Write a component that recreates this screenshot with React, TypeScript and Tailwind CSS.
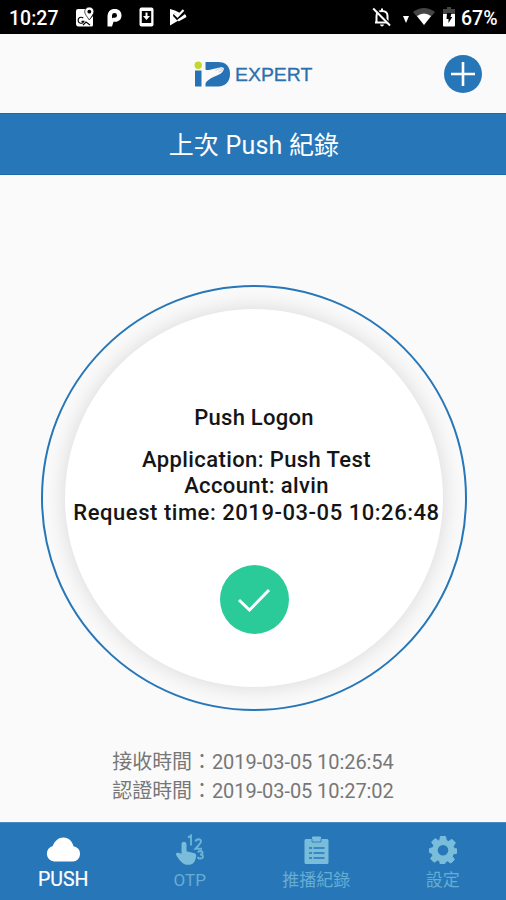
import React from "react";

function StatusBar() {
  return (
    <div className="flex h-[34px] shrink-0 items-center justify-between bg-black pr-2 pl-[9px] text-white">
      <div className="flex items-center">
        <span className="w-[50px] pt-[3px] whitespace-nowrap text-[19.5px] leading-[31px] font-medium">10:27</span>
        <svg className="ml-[16px] h-[20px] w-[20px]" viewBox="0 0 20 20">
          <path d="M3 2h9c-1 3 0 5 3 10l3-3v9q0 1.500-1.500 1.500H3Q1 19 1 17V4Q1 2 3 2z" fill="#fff" />
          <path d="M14.300 0a4.600 4.600 0 0 1 4.600 4.600c0 2.500-2.300 4.800-4.600 8.400-2.300-3.600-4.600-5.900-4.600-8.400A4.600 4.600 0 0 1 14.300 0z" fill="#fff" stroke="#000" strokeWidth=".7" />
          <circle cx="14.300" cy="4.700" r="1.900" fill="#000" />
          <path d="M8.300 11.200a3 3 0 1 0 .6 3.200H6.500M8 18l3-3 4 3" fill="none" stroke="#000" strokeWidth="1.100" />
        </svg>
        <svg className="ml-[12px] h-[19px] w-[15px]" viewBox="0 0 15 18" preserveAspectRatio="none">
          <path d="M.5 9C.5 3.500 3 1 7.800 1 12 1 14.500 3.500 14.500 7s-2.600 6-6.200 6H6.500L5 17.500H.5z" fill="#fff" />
          <path d="M5 10V7q0-2.300 2.500-2.300T10 7t-2.500 2.300H5.800" fill="#000" />
        </svg>
        <svg className="ml-[17px] h-[20px] w-[15px]" viewBox="0 0 15 20">
          <rect x=".5" y=".5" width="14" height="19" rx="2" fill="#fff" />
          <rect x="2.800" y="4" width="9.400" height="12" fill="#000" />
          <path d="M6.500 5.500h2V9H11l-3.500 4L4 9h2.500z" fill="#fff" />
        </svg>
        <svg className="ml-[15px] h-[18px] w-[18px]" viewBox="0 0 18 18">
          <path d="M1 1q5 1 10 4l-3 3-2-2-2 2 4 4 8-6 1 2L1 17.500z" fill="#fff" />
          <path d="M5 6l3.500 4L15.500 2.500" fill="none" stroke="#000" strokeWidth="3.200" />
          <path d="M5.500 5.500l3 3L14.500 2M9 12.500l8-4.500" fill="none" stroke="#fff" strokeWidth="2.200" />
        </svg>
      </div>
      <div className="flex items-center">
        <svg className="h-[20px] w-[20px]" viewBox="0 0 20 20">
          <path d="M4.500 15.500V9c0-3 2-5 5.500-5s5.500 2 5.500 5v6.500M3 15.500h14M10 4V1.500" fill="none" stroke="#fff" strokeWidth="2" />
          <path d="M8 17.500h4q-.5 2-2 2t-2-2z" fill="#fff" />
          <path d="M2.500 1L19 18" stroke="#000" strokeWidth="2" />
          <path d="M1.200 1.500L18 18.500" stroke="#fff" strokeWidth="2" />
        </svg>
        <svg className="mt-1 ml-[11px] h-[7px] w-[6px]" viewBox="0 0 6 7"><path d="M0 0h6L3 7z" fill="#fff" /></svg>
        <svg className="ml-[4px] h-[18px] w-[22px]" viewBox="0 0 22 18">
          <path d="M0 4Q11-4 22 4L11 17z" fill="#444" />
          <path d="M4 8q7-5 14 0l-7 9z" fill="#fff" />
        </svg>
        <svg className="ml-[8px] h-[20px] w-[12px]" viewBox="0 0 12 20">
          <path d="M4 0h4v2h4v6H0V2h4z" fill="#444" />
          <path d="M0 7h12v11.500q0 1-1 1H1q-1 0-1-1z" fill="#fff" />
          <path d="M4 6h4.500L7.500 10h1.800L5.500 16v-4H3.500z" fill="#000" />
        </svg>
        <span className="ml-[6px] w-[37px] pt-[3px] whitespace-nowrap text-[19.5px] leading-[31px] font-medium">67%</span>
      </div>
    </div>
  );
}

function Logo() {
  return (
    <div className="flex items-center">
      <svg className="h-[27px] w-[37px]" viewBox="0 0 37 27">
        <circle cx="4.200" cy="4.300" r="3.700" fill="#c3d82e" />
        <path d="M1 9.500h6.500v16H1z" fill="#2672b4" />
        <path d="M11.500 1H24c8 0 12 4.500 12 12s-4.500 12.500-12 12.500H11.500z" fill="#2672b4" />
        <path d="M11 8.500q2 1 5 .3L27 6.300q3-.3 3 1.700-1.500 4.500-7 6.500-4 1.300-6.500 3-3.500 2.300-5.500 5z" fill="#fafafa" />
        <path d="M21.500 9.500q4-2.500 7.500-1.500-1.500 3-4.500 3" fill="none" stroke="#8db7da" strokeWidth=".6" />
      </svg>
      <span className="ml-[4px] w-[78px] origin-left scale-x-[1.11] pt-px whitespace-nowrap font-['Liberation_Sans',sans-serif] text-[17.5px] leading-6 text-[#2c70ae] [-webkit-text-stroke:0.3px_#2c70ae]">EXPERT</span>
    </div>
  );
}

function Tab({ label, active, children }: { label: string; active?: boolean; children: React.ReactNode }) {
  return (
    <button className={active ? "flex flex-1 flex-col items-center pt-[10px] text-white" : "flex flex-1 flex-col items-center pt-[10px] text-[#65add2]"}>
      <span className="flex h-[33px] items-center justify-center">{children}</span>
      <span className={active ? "text-[19.5px] leading-[28px] [-webkit-text-stroke:0.2px_white]" : "pt-px text-[17px] leading-[27px]"}>{label}</span>
    </button>
  );
}

export default function App() {
  return (
    <div className="flex h-[900px] w-[506px] flex-col overflow-hidden bg-[#fafafa] font-['Roboto','Noto_Sans_CJK_TC',sans-serif]">
      <StatusBar />
      <header className="grid h-[79px] shrink-0 grid-cols-[1fr_auto_1fr] items-center pr-[24px]">
        <span />
        <div className="ml-[24px] pt-px"><Logo /></div>
        <button className="flex size-[38px] items-center justify-center justify-self-end rounded-full bg-[#2777b8]">
          <svg className="size-6" viewBox="0 0 24 24"><path d="M12 0v24M0 12h24" stroke="#fff" strokeWidth="2.600" /></svg>
        </button>
      </header>
      <h1 className="flex h-[62px] shrink-0 items-center justify-center border-y border-[#2069a9] bg-[#2777b8] pt-[3px] pl-[2px] text-[25px] tracking-[0.2px] text-white">上次 Push 紀錄</h1>
      <main className="flex flex-1 flex-col items-center pt-[110px] pl-[2px]">
        <div className="flex size-[426px] shrink-0 items-center justify-center rounded-full border-2 border-[#2777b8]">
          <div className="flex size-[378px] flex-col items-center rounded-full bg-white pt-[95px] text-[22px] leading-[27px] font-medium whitespace-nowrap text-[#151515] shadow-[0_0_22px_rgba(0,0,0,0.14)]">
            <p className="tracking-[0.25px]">Push Logon</p>
            <p className="mt-[15px] ml-[5px] tracking-[0.4px]">Application: Push Test</p>
            <p className="ml-[5px] leading-[26px] tracking-[0.38px]">Account: alvin</p>
            <p className="ml-[5px] tracking-[0.54px]">Request time: 2019-03-05 10:26:48</p>
            <div className="mt-[39px] flex size-[69px] shrink-0 items-center justify-center rounded-full bg-[#2acb98]">
              <svg className="h-[24px] w-[34px]" viewBox="0 0 34 24"><path d="M2 12l10.500 10L32 2" fill="none" stroke="#fff" strokeWidth="3" /></svg>
            </div>
          </div>
        </div>
        <div className="mt-[37px] mr-[2px] text-[20px] leading-[29px] tracking-[-0.07px] whitespace-nowrap text-[#777]">
          <p>接收時間：2019-03-05 10:26:54</p>
          <p>認證時間：2019-03-05 10:27:02</p>
        </div>
      </main>
      <nav className="flex h-[78px] shrink-0 border-t border-[#4b8bc0] bg-[#2777b8]">
        <Tab label="PUSH" active>
          <svg className="h-[25px] w-[35px]" viewBox="0 0 35 25"><path d="M8 24.500A7.900 7.900 0 0 1 6.700 9C9 3.500 12.500.5 17.500.5c5.500 0 8.500 3.500 10 8.700A7.700 7.700 0 0 1 27 24.500z" fill="#fff" /></svg>
        </Tab>
        <Tab label="OTP">
          <svg className="h-[31px] w-[30px]" viewBox="0 0 30 31" fill="#7abddb">
            <path d="M6.500 10.200a2.500 2.500 0 0 1 5 0v7l8 2q2 .5 1.700 2.500-.8 8-6 9H11q-4-.5-9.500-9-1.500-3.500 2-3l3 1z" />
            <path d="M13 3.500l3-2v10M20.500 7.500q.5-2.300 3-2.300 2.700.2 2.500 2.500-.2 1.500-5.500 7H27M23 18.500q.5-1.500 2.500-1.500 2.200.2 2 2 0 1.500-2.500 1.500 3 0 3 2-.2 2-2.700 2-2.300 0-2.500-1.700" fill="none" stroke="#6ab4d5" strokeWidth="1.900" />
          </svg>
        </Tab>
        <Tab label="推播紀錄">
          <svg className="h-[28px] w-[25px]" viewBox="0 0 25 28">
            <path d="M2 3h6V1.500Q8 .5 9 .5h7q1 0 1 1V3h6q1.500 0 1.500 1.500v22q0 1.500-1.500 1.500H2Q.5 28 .5 26.500v-22Q.5 3 2 3z" fill="#7abddb" />
            <path d="M8 3v3h9V3" fill="none" stroke="#2777b8" strokeWidth=".8" />
            <path d="M9.500 12h11M9.500 17h11M9.500 22h11M5 12h3M5 17h3M5 22h3" fill="none" stroke="#2777b8" strokeWidth="1.500" />
          </svg>
        </Tab>
        <Tab label="設定">
          <svg className="h-[28px] w-[28px]" viewBox="0 0 28 28">
            <path d="M11.500.5h5l.8 4 2.200 1 3.400-2.200 3.500 3.500-2.200 3.400 1 2.200 2.800.6v4l-3.800 1-1 2.200 2.200 3.400-3.500 3.500-3.400-2.200-2.200 1-.8 3h-4l-.8-3.800-2.200-1-3.400 2.200-3.500-3.500 2.200-3.400-1-2.200L.5 16.500v-4l3.300-.8 1-2.200-2.200-3.400 3.500-3.500 3.400 2.200 1.200-.5z" fill="#7abddb" stroke="#7abddb" strokeLinejoin="round" />
            <circle cx="14" cy="14.200" r="5.300" fill="#2777b8" />
          </svg>
        </Tab>
      </nav>
    </div>
  );
}
